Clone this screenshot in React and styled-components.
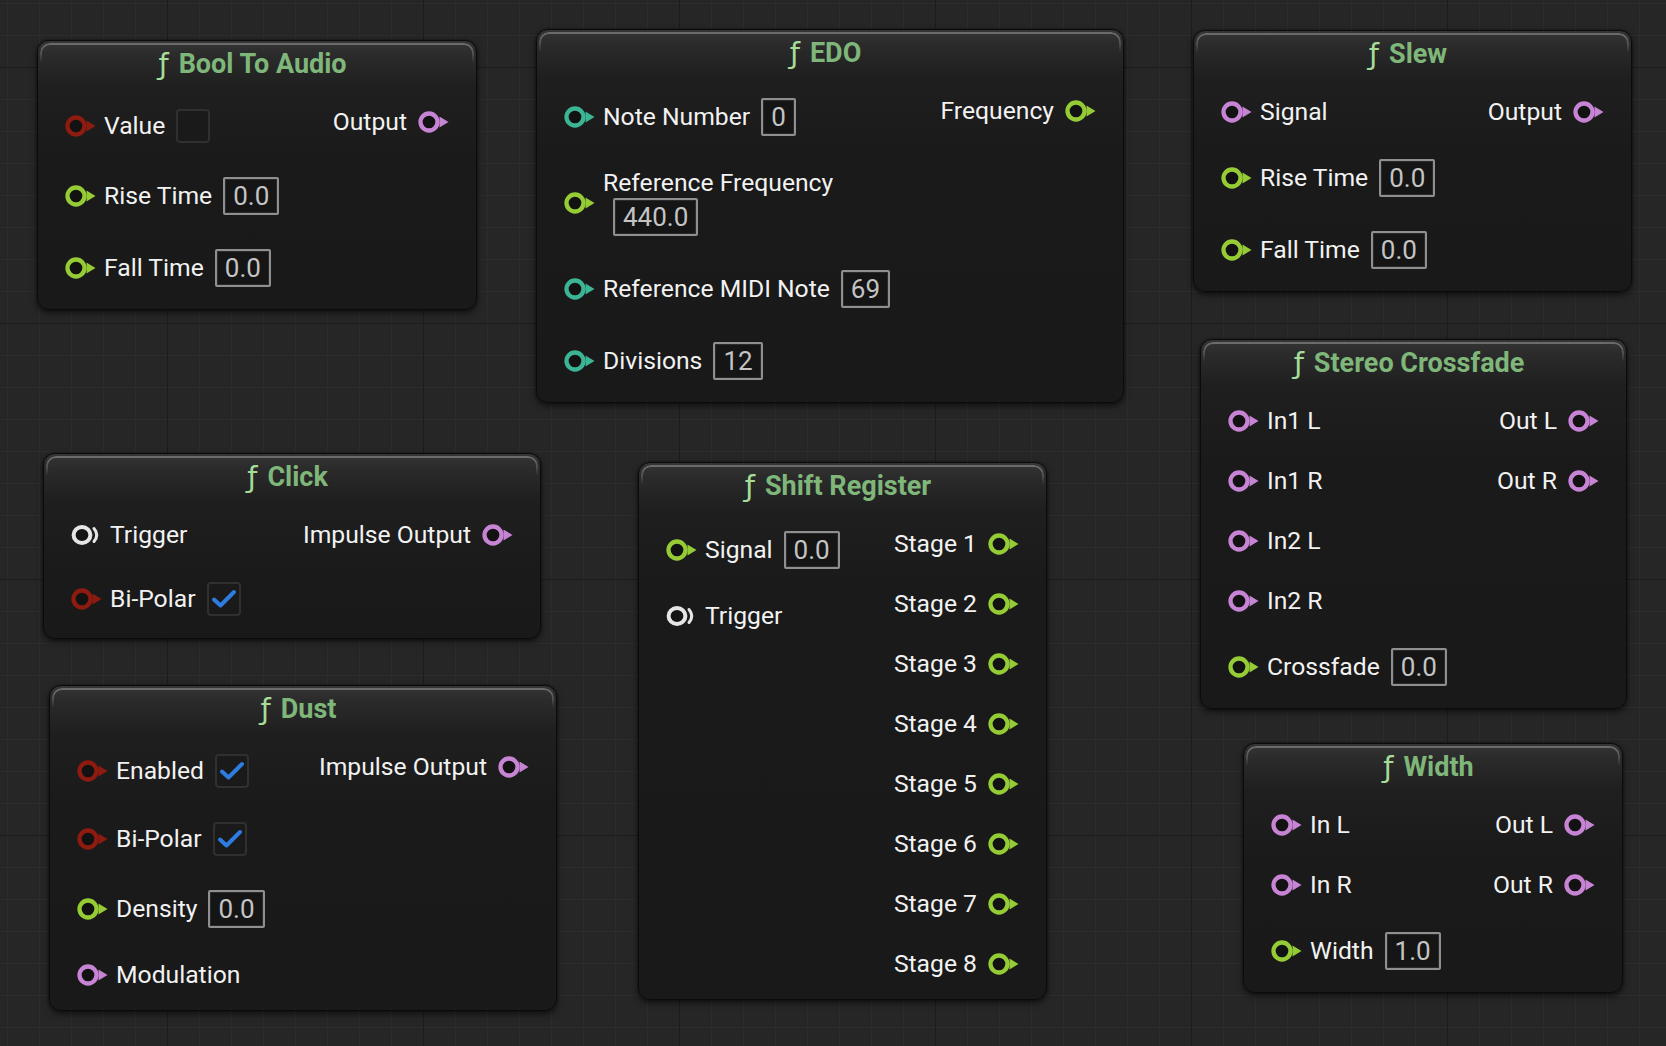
import React from "react";
import styled, { createGlobalStyle } from "styled-components";

const GlobalStyle = createGlobalStyle`
  html, body { margin: 0; padding: 0; background: #262626; }
  body { font-family: Roboto, "Noto Sans", "Liberation Sans", sans-serif; -webkit-font-smoothing: antialiased; }
  * { box-sizing: border-box; }
`;

const PIN_COLORS = {
  float: "#95cc36",
  int: "#3bb593",
  bool: "#8e1b10",
  audio: "#c884d4",
  trigger: "#e6e6e6",
};

const Canvas = styled.div`
  position: relative;
  width: 100vw;
  height: 100vh;
  overflow: hidden;
  background-color: #262626;
  background-image:
    linear-gradient(to right, #1c1c1c 1px, transparent 1px),
    linear-gradient(to bottom, #1c1c1c 1px, transparent 1px),
    linear-gradient(to right, #2c2c2c 1px, transparent 1px),
    linear-gradient(to bottom, #2c2c2c 1px, transparent 1px);
  background-size: 256px 256px, 256px 256px, 32px 32px, 32px 32px;
  background-position: 167px 0, 0 67px, 7px 0, 0 3px;
`;

const NodeBox = styled.div`
  position: absolute;
  left: ${(p) => p.$x}px;
  top: ${(p) => p.$y}px;
  width: ${(p) => p.$w}px;
  border-radius: 12px;
  border: 1px solid #0b0b0b;
  background: linear-gradient(
    180deg,
    #353535 0px,
    #2b2b2b 14px,
    #1f1f1f 46px,
    #1a1a1a 120px,
    #181918 100%
  );
  box-shadow: 0 3px 6px rgba(0, 0, 0, 0.55), 0 0 2px rgba(0, 0, 0, 0.6);

  &::before {
    content: "";
    position: absolute;
    left: 2px;
    right: 2px;
    top: 2px;
    height: 18px;
    border: 2px solid #6b6b6b;
    border-bottom: none;
    border-radius: 10px 10px 0 0;
    -webkit-mask-image: linear-gradient(to bottom, #000 20%, transparent 100%);
    mask-image: linear-gradient(to bottom, #000 20%, transparent 100%);
    pointer-events: none;
  }
`;

const Header = styled.div`
  height: 45px;
  display: flex;
  align-items: center;
  justify-content: center;
  padding-right: 9px;
`;

const Title = styled.div`
  display: flex;
  align-items: baseline;
  font-family: Roboto, "Liberation Sans", sans-serif;
  font-weight: 700;
  font-size: 27px;
  line-height: 30px;
  color: #7fb67a;
`;

const FuncGlyph = styled.span`
  font-family: "DejaVu Sans", "Liberation Serif", serif;
  font-weight: 400;
  font-size: 29px;
  color: #a6dc98;
  margin-right: 10px;
  position: relative;
  top: 1px;
`;

const Body = styled.div`
  display: flex;
  justify-content: space-between;
  padding: 23px 27px 22px 27px;
`;

const Column = styled.div`
  display: flex;
  flex-direction: column;
  gap: 34px;
  align-items: ${(p) => (p.$right ? "flex-end" : "flex-start")};
`;

const Row = styled.div`
  display: flex;
  align-items: center;
  gap: ${(p) => (p.$right ? "11px" : "8px")};
  min-height: 26px;
`;

const Label = styled.span`
  font-size: 24.7px;
  line-height: 26px;
  color: #f2f2f2;
  white-space: nowrap;
`;

const Stack = styled.div`
  display: flex;
  flex-direction: column;
  align-items: flex-start;
  gap: 2px;
`;

const NumBox = styled.div`
  height: 38px;
  margin-left: ${(p) => (p.$indent ? "10px" : "3px")};
  padding: 0 8px;
  border: 2px solid #8f8f8f;
  border-radius: 2px;
  background: #151515;
  box-shadow: inset 0 0 0 1px #2a2a2a;
  font-size: 26px;
  line-height: 34px;
  color: #c4c4c4;
  white-space: nowrap;
`;

const CheckBox = styled.div`
  width: 34px;
  height: 34px;
  margin-left: 3px;
  border: 2px solid #303030;
  border-radius: 4px;
  background: #1a1a1a;
  display: flex;
  align-items: center;
  justify-content: center;
`;

function Pin({ type }) {
  const c = PIN_COLORS[type];
  if (type === "trigger") {
    return (
      <svg width="31" height="22" viewBox="0 0 31 22">
        <ellipse cx="11" cy="11" rx="8.4" ry="8" fill="#141414" stroke={c} strokeWidth="4" />
        <path d="M23 4.5 Q28.5 11 23 17.5" fill="none" stroke={c} strokeWidth="3" strokeLinecap="round" />
      </svg>
    );
  }
  return (
    <svg width="31" height="22" viewBox="0 0 31 22">
      <circle cx="11" cy="11" r="8.5" fill="#121212" stroke={c} strokeWidth="4.3" />
      <path d="M21.5 5.5 L30.5 11 L21.5 16.5 Z" fill={c} />
    </svg>
  );
}

function Check({ checked }) {
  return (
    <CheckBox>
      {checked && (
        <svg width="26" height="22" viewBox="0 0 26 22">
          <path d="M3 11.5 L9.5 17.5 L23 4" fill="none" stroke="#2d7ce0" strokeWidth="4" strokeLinecap="round" strokeLinejoin="round" />
        </svg>
      )}
    </CheckBox>
  );
}

function Widget({ input }) {
  if (input.check !== undefined) return <Check checked={input.check} />;
  if (input.num !== undefined) return <NumBox>{input.num}</NumBox>;
  return null;
}

function InputRow({ input }) {
  if (input.stacked) {
    return (
      <Row>
        <Pin type={input.type} />
        <Stack>
          <Label>{input.label}</Label>
          <NumBox $indent>{input.num}</NumBox>
        </Stack>
      </Row>
    );
  }
  return (
    <Row>
      <Pin type={input.type} />
      <Label>{input.label}</Label>
      <Widget input={input} />
    </Row>
  );
}

function OutputRow({ output }) {
  return (
    <Row $right>
      <Label>{output.label}</Label>
      <Pin type={output.type} />
    </Row>
  );
}

function Node({ node }) {
  return (
    <NodeBox $x={node.x} $y={node.y} $w={node.w}>
      <Header>
        <Title>
          <FuncGlyph>ƒ</FuncGlyph>
          {node.title}
        </Title>
      </Header>
      <Body>
        <Column>
          {node.inputs.map((i) => (
            <InputRow key={i.label} input={i} />
          ))}
        </Column>
        <Column $right>
          {node.outputs.map((o) => (
            <OutputRow key={o.label} output={o} />
          ))}
        </Column>
      </Body>
    </NodeBox>
  );
}

const NODES = [
  {
    title: "Bool To Audio", x: 37, y: 40, w: 440,
    inputs: [
      { label: "Value", type: "bool", check: false },
      { label: "Rise Time", type: "float", num: "0.0" },
      { label: "Fall Time", type: "float", num: "0.0" },
    ],
    outputs: [{ label: "Output", type: "audio" }],
  },
  {
    title: "EDO", x: 536, y: 29, w: 588,
    inputs: [
      { label: "Note Number", type: "int", num: "0" },
      { label: "Reference Frequency", type: "float", num: "440.0", stacked: true },
      { label: "Reference MIDI Note", type: "int", num: "69" },
      { label: "Divisions", type: "int", num: "12" },
    ],
    outputs: [{ label: "Frequency", type: "float" }],
  },
  {
    title: "Slew", x: 1193, y: 30, w: 439,
    inputs: [
      { label: "Signal", type: "audio" },
      { label: "Rise Time", type: "float", num: "0.0" },
      { label: "Fall Time", type: "float", num: "0.0" },
    ],
    outputs: [{ label: "Output", type: "audio" }],
  },
  {
    title: "Stereo Crossfade", x: 1200, y: 339, w: 427,
    inputs: [
      { label: "In1 L", type: "audio" },
      { label: "In1 R", type: "audio" },
      { label: "In2 L", type: "audio" },
      { label: "In2 R", type: "audio" },
      { label: "Crossfade", type: "float", num: "0.0" },
    ],
    outputs: [
      { label: "Out L", type: "audio" },
      { label: "Out R", type: "audio" },
    ],
  },
  {
    title: "Width", x: 1243, y: 743, w: 380,
    inputs: [
      { label: "In L", type: "audio" },
      { label: "In R", type: "audio" },
      { label: "Width", type: "float", num: "1.0" },
    ],
    outputs: [
      { label: "Out L", type: "audio" },
      { label: "Out R", type: "audio" },
    ],
  },
  {
    title: "Click", x: 43, y: 453, w: 498,
    inputs: [
      { label: "Trigger", type: "trigger" },
      { label: "Bi-Polar", type: "bool", check: true },
    ],
    outputs: [{ label: "Impulse Output", type: "audio" }],
  },
  {
    title: "Shift Register", x: 638, y: 462, w: 409,
    inputs: [
      { label: "Signal", type: "float", num: "0.0" },
      { label: "Trigger", type: "trigger" },
    ],
    outputs: [1, 2, 3, 4, 5, 6, 7, 8].map((n) => ({ label: `Stage ${n}`, type: "float" })),
  },
  {
    title: "Dust", x: 49, y: 685, w: 508,
    inputs: [
      { label: "Enabled", type: "bool", check: true },
      { label: "Bi-Polar", type: "bool", check: true },
      { label: "Density", type: "float", num: "0.0" },
      { label: "Modulation", type: "audio" },
    ],
    outputs: [{ label: "Impulse Output", type: "audio" }],
  },
];

export default function App() {
  return (
    <>
      <GlobalStyle />
      <Canvas>
        {NODES.map((n) => (
          <Node key={n.title} node={n} />
        ))}
      </Canvas>
    </>
  );
}
